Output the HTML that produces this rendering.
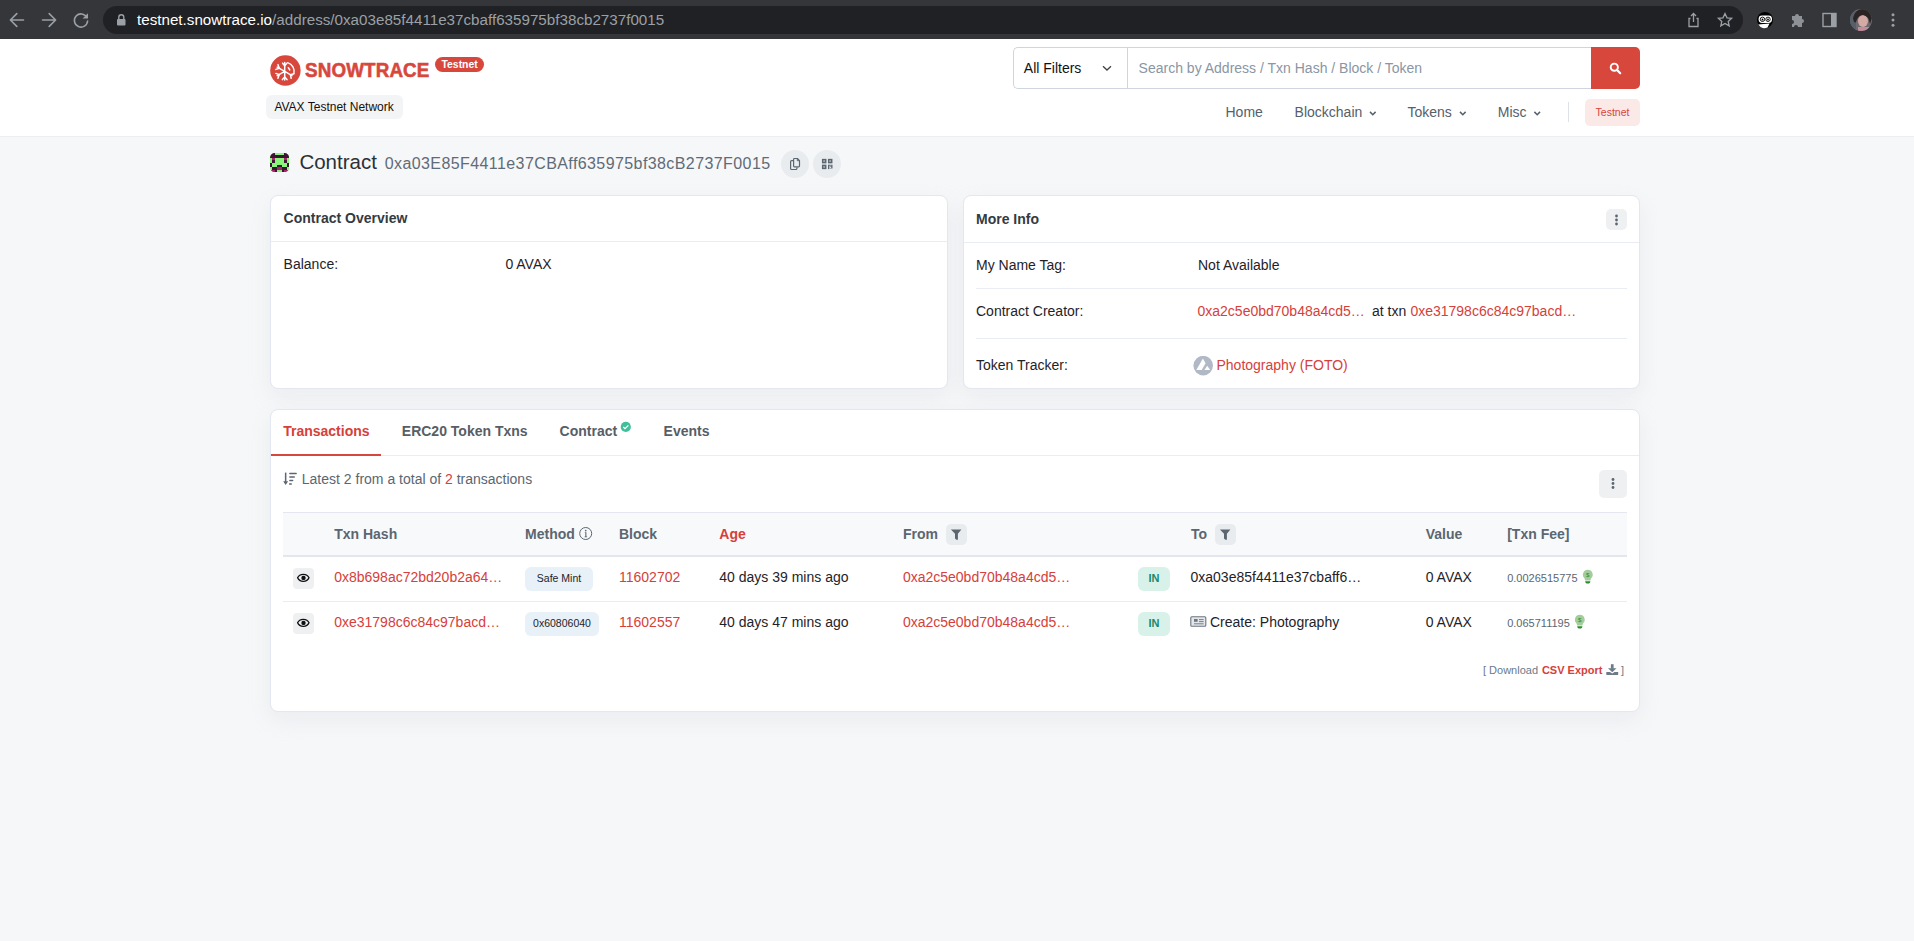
<!DOCTYPE html>
<html><head><meta charset="utf-8">
<style>
*{box-sizing:border-box;margin:0;padding:0}
html,body{width:1914px;height:941px;overflow:hidden}
body{background:#f6f7f8;font-family:"Liberation Sans",sans-serif;font-size:14px;color:#1f2328;position:relative}
.a{position:absolute}
.t{position:absolute;white-space:nowrap;line-height:1}
.red{color:#d6403a}
.b{font-weight:700}
#chrome{left:0;top:0;width:1914px;height:39px;background:#35363a}
#pill{left:103px;top:6px;width:1640px;height:28px;border-radius:14px;background:#202124}
#hdr{left:0;top:39px;width:1914px;height:98px;background:#fff;border-bottom:1px solid #eceef1}
.card{position:absolute;background:#fff;border:1px solid #e4e7ef;border-radius:8px;box-shadow:0 8px 22px rgba(189,197,209,.2)}
.hr{position:absolute;height:1px;background:#e9ecf3}
.circ{position:absolute;border-radius:50%;background:#e9ecef}
.sqbtn{position:absolute;border-radius:5px;background:#eef0f2}
.lbl{color:#1f2328}
.th{font-weight:700;color:#5b6670}
.badge{position:absolute;border-radius:6px;background:#e8f0f8;text-align:center;font-size:10.5px;color:#1f2328;line-height:22.5px}
.inb{position:absolute;border-radius:6px;background:#d8f2ea;color:#1f876b;font-weight:700;font-size:11px;text-align:center;line-height:22.5px}
</style></head><body>

<!-- browser chrome -->
<div id="chrome" class="a"></div>
<div id="pill" class="a"></div>
<svg class="a" style="left:0;top:0" width="1914" height="39">
  <g stroke="#9aa0a6" stroke-width="1.6" fill="none" stroke-linecap="round" stroke-linejoin="round">
    <path d="M23.5 20H10.8M16.8 13.6L10.4 20l6.4 6.4"/>
    <path d="M42.5 20h12.7M49.2 13.6L55.6 20l-6.4 6.4"/>
    <path d="M86.8 17.3A6.6 6.6 0 1 0 87.6 21"/>
  </g>
  <path d="M88 13.2v5.4h-5.4z" fill="#9aa0a6"/>
  <rect x="117" y="19" width="8.5" height="6.5" rx="1" fill="#9aa0a6"/>
  <path d="M118.8 19.5v-2.2a2.5 2.5 0 0 1 5 0v2.2" stroke="#9aa0a6" stroke-width="1.4" fill="none"/>
  <g stroke="#9aa0a6" stroke-width="1.3" fill="none">
    <path d="M1690.5 18.5h-1.5v8h9v-8h-1.5"/><path d="M1693.5 22V13.5M1691 16l2.5-2.5 2.5 2.5"/>
    <path d="M1725 13.5l2 4.3 4.6.5-3.4 3.1 1 4.5-4.2-2.4-4.2 2.4 1-4.5-3.4-3.1 4.6-.5z"/>
  </g>
  <circle cx="1765" cy="20" r="8" fill="#000"/>
  <rect x="1758.6" y="15.4" width="13.4" height="7.6" rx="3.4" fill="#fff"/>
  <circle cx="1762.5" cy="19.3" r="2.2" stroke="#000" stroke-width=".9" fill="#fff"/>
  <circle cx="1768" cy="19.3" r="2.2" stroke="#000" stroke-width=".9" fill="#fff"/>
  <circle cx="1762.5" cy="19.5" r=".9" fill="#000"/><circle cx="1768" cy="19.5" r=".9" fill="#000"/>
  <path d="M1758.3 24.6L1769.5 23.6L1767.5 27.6Q1765 28.4 1762.6 28Q1759.8 27 1758.3 24.6z" fill="#fff"/>
  <path d="M1792 16h3a2 2 0 0 1 4 0h3v3a2 2 0 0 1 0 4v4h-4a2 2 0 0 0-4 0h-2v-3a2 2 0 0 0 0-4z" fill="#8e9196"/>
  <rect x="1823" y="13.5" width="13" height="13" stroke="#9aa0a6" stroke-width="1.4" fill="none"/>
  <rect x="1831" y="13.5" width="5" height="13" fill="#9aa0a6"/>
  <clipPath id="av"><circle cx="1861" cy="20" r="11"/></clipPath>
  <g clip-path="url(#av)"><rect x="1850" y="9" width="22" height="22" fill="#6d6a70"/>
  <rect x="1850" y="9" width="6" height="22" fill="#57606a"/>
  <ellipse cx="1863" cy="21" rx="5" ry="6" fill="#d4aaa4"/>
  <path d="M1853 18q2-9 10-9q8 0 9 9q-1 3-2 6q-1-8-7-9q-5 0-7 7q-2 2-3-4z" fill="#2b2424"/>
  <rect x="1858" y="27" width="12" height="5" fill="#c08d9c"/></g>
  <g fill="#9aa0a6"><circle cx="1893" cy="14.8" r="1.5"/><circle cx="1893" cy="20" r="1.5"/><circle cx="1893" cy="25.2" r="1.5"/></g>
</svg>
<div class="t" style="left:137px;top:12px;font-size:15.2px;color:#fff">testnet.snowtrace.io<span style="color:#9aa0a6">/address/0xa03e85f4411e37cbaff635975bf38cb2737f0015</span></div>

<!-- header -->
<div id="hdr" class="a"></div>
<svg class="a" style="left:266px;top:51px" width="40" height="40" viewBox="0 0 40 40">
  <circle cx="19.4" cy="19.5" r="15.2" fill="#d8473c"/>
  <g stroke="#fff" stroke-width="1.5" fill="none" stroke-linecap="round" stroke-linejoin="round">
    <path d="M18.7 20.4V11.6M18.7 20.4V29M18.7 20.4L11.2 16.1M18.7 20.4L11.2 24.7M18.7 20.4L26 24.6"/>
    <path d="M16.6 12.2l2.1 2.6 2.1-2.6M16.4 28.6l2.3-2.5 2.3 2.5M11.9 13.6l1.4 3.6-3.4 1.2M11.9 27.2l1.4-3.6-3.4-1.2M25.2 27.3l-0.8-3.6 3.5-.9"/>
    <path d="M21.6 11.6A9.2 9.2 0 0 1 27.9 22.6" stroke-width="1.4"/>
    <path d="M22.3 16.7l1.5 2.3" stroke-width="1.4"/>
  </g>
</svg>
<div class="t b" style="left:305px;top:60.4px;font-size:20px;color:#d8473c;transform:scaleX(.94);transform-origin:left top;letter-spacing:.15px;-webkit-text-stroke:.55px #d8473c">SNOWTRACE</div>
<div class="a" style="left:435px;top:57px;width:49px;height:15px;border-radius:8px;background:#d8473c"></div>
<div class="t b" style="left:441.5px;top:59.5px;font-size:10.4px;color:#fff">Testnet</div>
<div class="a" style="left:266px;top:95px;width:137px;height:23.5px;border-radius:6px;background:#f3f4f5"></div>
<div class="t" style="left:274.4px;top:100.6px;font-size:12px;color:#111">AVAX Testnet Network</div>

<!-- search -->
<div class="a" style="left:1013px;top:47px;width:579px;height:42px;border:1px solid #cfd5df;border-right:none;border-radius:5px 0 0 5px;background:#fff"></div>
<div class="a" style="left:1127px;top:48px;width:1px;height:40px;background:#cfd5df"></div>
<div class="t" style="left:1023.8px;top:61.3px;font-size:14px;color:#111">All Filters</div>
<svg class="a" style="left:1100px;top:63px" width="14" height="10"><path d="M3 3.2l4 3.8 4-3.8" stroke="#444" stroke-width="1.3" fill="none"/></svg>
<div class="t" style="left:1138.6px;top:61.3px;font-size:14px;color:#8a96a3">Search by Address / Txn Hash / Block / Token</div>
<div class="a" style="left:1591px;top:47px;width:49px;height:42px;border-radius:0 5px 5px 0;background:#d8473c"></div>
<svg class="a" style="left:1605px;top:58px" width="20" height="20"><circle cx="9.3" cy="9.2" r="3.6" stroke="#fff" stroke-width="1.9" fill="none"/><path d="M11.8 11.8l3.4 3.4" stroke="#fff" stroke-width="2.2" stroke-linecap="round"/></svg>

<!-- nav -->
<div class="t" style="left:1225.5px;top:105px;font-size:14px;color:#55606b">Home</div>
<div class="t" style="left:1294.6px;top:105px;font-size:14px;color:#55606b">Blockchain</div>
<div class="t" style="left:1407.5px;top:105px;font-size:14px;color:#55606b">Tokens</div>
<div class="t" style="left:1497.8px;top:105px;font-size:14px;color:#55606b">Misc</div>
<svg class="a" style="left:0;top:100px" width="1914" height="30">
  <g stroke="#55606b" stroke-width="1.5" fill="none">
    <path d="M1370 11.9l2.8 2.8 2.8-2.8"/><path d="M1460 11.9l2.8 2.8 2.8-2.8"/><path d="M1534.4 11.9l2.8 2.8 2.8-2.8"/>
  </g>
  <rect x="1568" y="2" width="1" height="20" fill="#dde1e8"/>
</svg>
<div class="a" style="left:1585px;top:99px;width:55px;height:26.5px;border-radius:5px;background:#fbe9e8"></div>
<div class="t" style="left:1595.6px;top:107.2px;font-size:10.5px;color:#d6453a">Testnet</div>

<!-- title -->
<svg class="a" style="left:270px;top:152.7px" width="19.2" height="19.2" viewBox="0 0 8 8" shape-rendering="crispEdges">
  <defs><clipPath id="rc"><rect width="8" height="8" rx="2"/></clipPath></defs>
  <g clip-path="url(#rc)">
  <rect width="8" height="8" fill="#88f47a"/>
  <g fill="#3b1534">
    <rect x="0" y="0" width="2" height="1"/><rect x="6" y="0" width="2" height="1"/>
    <rect x="0" y="1" width="8" height="1"/>
    <rect x="1" y="3" width="1" height="1"/><rect x="6" y="3" width="1" height="1"/>
    <rect x="0" y="4" width="1" height="2"/><rect x="7" y="4" width="1" height="2"/>
    <rect x="3" y="5" width="2" height="1"/>
    <rect x="1" y="6" width="2" height="1"/><rect x="5" y="6" width="2" height="1"/>
    <rect x="2" y="7" width="1" height="1"/><rect x="5" y="7" width="1" height="1"/>
  </g>
  <g fill="#a8276a">
    <rect x="1" y="2" width="1" height="1"/><rect x="6" y="2" width="1" height="1"/>
    <rect x="3" y="6" width="2" height="1"/>
    <rect x="0" y="7" width="2" height="1"/><rect x="6" y="7" width="2" height="1"/>
  </g>
  </g>
</svg>
<div class="t" style="left:299.4px;top:152.2px;font-size:20.5px;color:#2b3036">Contract</div>
<div class="t" style="left:384.7px;top:156px;font-size:16px;letter-spacing:.41px;color:#5f6b77">0xa03E85F4411e37CBAff635975bf38cB2737F0015</div>
<div class="circ" style="left:781px;top:150px;width:28px;height:28px"></div>
<div class="circ" style="left:813px;top:150px;width:28px;height:28px"></div>
<svg class="a" style="left:781px;top:150px" width="60" height="28">
  <g stroke="#5c6670" stroke-width="1.2" fill="none" stroke-linejoin="round">
    <path d="M12.2 10.6h-1.6a1 1 0 0 0-1 1v6.9a1 1 0 0 0 1 1h4.3a1 1 0 0 0 1-1v-1.2"/>
    <path d="M13.4 8.5h3l2.1 2.1v5.5a.8.8 0 0 1-.8.8h-4.3a.8.8 0 0 1-.8-.8V9.3a.8.8 0 0 1 .8-.8z"/>
    <path d="M16.3 8.5v2.2h2.2" stroke-width="1"/>
  </g>
  <g stroke="#5c6670" stroke-width="1.5" fill="none">
    <rect x="41.7" y="9.6" width="3" height="3"/><rect x="47.7" y="9.6" width="3" height="3"/><rect x="41.7" y="15.4" width="3" height="3"/>
  </g>
  <g fill="#5c6670">
    <rect x="42.7" y="10.6" width="1" height="1"/><rect x="48.7" y="10.6" width="1" height="1"/><rect x="42.7" y="16.4" width="1" height="1"/>
    <rect x="47" y="14.7" width="1.4" height="4.4"/><rect x="48.4" y="14.7" width="1.2" height="1.3"/><rect x="49.4" y="15.6" width="1.2" height="1.5"/><rect x="50.2" y="14.7" width="1.3" height="3.3"/><rect x="49" y="18" width="2.5" height=".9" opacity=".5"/>
  </g>
</svg>

<!-- cards -->
<div class="card" style="left:270px;top:195px;width:678px;height:194px"></div>
<div class="hr" style="left:271px;top:241px;width:676px"></div>
<div class="t b" style="left:283.6px;top:211px;font-size:14px;color:#343a41">Contract Overview</div>
<div class="t" style="left:283.6px;top:257.2px;font-size:14px">Balance:</div>
<div class="t" style="left:505.4px;top:257.2px;font-size:14px">0 AVAX</div>

<div class="card" style="left:963px;top:195px;width:677px;height:194px"></div>
<div class="hr" style="left:964px;top:242px;width:675px"></div>
<div class="t b" style="left:976px;top:212.4px;font-size:14px;color:#343a41">More Info</div>
<div class="sqbtn" style="left:1606px;top:209px;width:21px;height:21px"></div>
<svg class="a" style="left:1606px;top:209px" width="21" height="21"><g fill="#5c6670"><circle cx="10.5" cy="7" r="1.4"/><circle cx="10.5" cy="11" r="1.4"/><circle cx="10.5" cy="15" r="1.4"/></g></svg>
<div class="t" style="left:976px;top:257.8px;font-size:14px">My Name Tag:</div>
<div class="t" style="left:1198px;top:257.8px;font-size:14px">Not Available</div>
<div class="hr" style="left:976px;top:288px;width:651px"></div>
<div class="t" style="left:976px;top:304.2px;font-size:14px">Contract Creator:</div>
<div class="t red" style="left:1197.5px;top:304.2px;font-size:14px">0xa2c5e0bd70b48a4cd5…</div>
<div class="t" style="left:1372px;top:304.2px;font-size:14px">at txn</div>
<div class="t red" style="left:1410.4px;top:304.2px;font-size:14px">0xe31798c6c84c97bacd…</div>
<div class="hr" style="left:976px;top:338px;width:651px"></div>
<div class="t" style="left:976px;top:357.8px;font-size:14px">Token Tracker:</div>
<svg class="a" style="left:1192.7px;top:356.3px" width="20" height="20" viewBox="0 0 20 20"><circle cx="10.2" cy="9.6" r="9.8" fill="#b1b8c6"/><path d="M9.9 2.5L12.6 7.3L8.7 13.9H3.3z" fill="#fff"/><path d="M14.2 9.7L17.2 13.9H11.4z" fill="#fff"/></svg>
<div class="t red" style="left:1216.5px;top:357.8px;font-size:14px">Photography (FOTO)</div>

<!-- tabs card -->
<div class="card" style="left:270px;top:409px;width:1370px;height:303px"></div>
<div class="hr" style="left:271px;top:455px;width:1368px"></div>
<div class="a" style="left:271px;top:454px;width:110px;height:2px;background:#d8473c"></div>
<div class="t b red" style="left:283.2px;top:424px;font-size:14px">Transactions</div>
<div class="t b" style="left:401.8px;top:424px;font-size:14px;color:#575e66">ERC20 Token Txns</div>
<div class="t b" style="left:559.6px;top:424px;font-size:14px;color:#575e66">Contract</div>
<svg class="a" style="left:620px;top:421px" width="12" height="12"><circle cx="5.8" cy="5.9" r="5.1" fill="#40bf9a"/><path d="M3.3 6l1.7 1.6 3.4-3.2" stroke="#fff" stroke-width="1.3" fill="none"/></svg>
<div class="t b" style="left:663.6px;top:424px;font-size:14px;color:#575e66">Events</div>

<svg class="a" style="left:283px;top:472px" width="16" height="14">
  <rect x="1.9" y=".6" width="1.5" height="9.5" fill="#5c6670"/><path d="M.2 9.2h4.9l-2.45 3.7z" fill="#5c6670"/>
  <g fill="#5c6670"><rect x="6.1" y=".65" width="7.8" height="1.5" rx=".75"/><rect x="6.1" y="4.25" width="5.9" height="1.5" rx=".75"/><rect x="6.1" y="7.75" width="4.3" height="1.5" rx=".75"/><rect x="6.1" y="11.25" width="2.7" height="1.5" rx=".3"/></g>
</svg>
<div class="t" style="left:301.8px;top:471.9px;font-size:14px;color:#5b6670">Latest 2 from a total of <span class="red">2</span> transactions</div>
<div class="sqbtn" style="left:1599px;top:470px;width:28px;height:28px"></div>
<svg class="a" style="left:1599px;top:470px" width="28" height="27"><g fill="#5c6670"><circle cx="14" cy="9.5" r="1.4"/><circle cx="14" cy="13.5" r="1.4"/><circle cx="14" cy="17.5" r="1.4"/></g></svg>

<!-- table -->
<div class="a" style="left:283px;top:512px;width:1344px;height:45px;background:#f8f9fb;border-top:1px solid #e4e7ef;border-bottom:2px solid #e2e6ee"></div>
<div class="t th" style="left:334.2px;top:527px;font-size:14px">Txn Hash</div>
<div class="t th" style="left:525.1px;top:527px;font-size:14px">Method</div>
<svg class="a" style="left:579px;top:527px" width="14" height="14"><circle cx="6.7" cy="6.5" r="6" stroke="#5b6670" stroke-width="1" fill="none"/><path d="M5.8 5.2h1.6v4.2h.7v.9H5.6v-.9h.7V6.1h-.5z" fill="#5b6670"/><circle cx="6.75" cy="3.6" r=".85" fill="#5b6670"/></svg>
<div class="t th" style="left:619px;top:527px;font-size:14px">Block</div>
<div class="t b red" style="left:719.3px;top:527px;font-size:14px">Age</div>
<div class="t th" style="left:902.9px;top:527px;font-size:14px">From</div>
<div class="sqbtn" style="left:946px;top:524px;width:21px;height:21px;border-radius:5px;background:#e9ecef"></div>
<svg class="a" style="left:946px;top:524px" width="21" height="21"><path d="M4.9 5.6H15.4L11.9 9.8V15.8H10.4L9 14.6V9.8Z" fill="#5c6670"/></svg>
<div class="t th" style="left:1190.9px;top:527px;font-size:14px">To</div>
<div class="sqbtn" style="left:1215px;top:524px;width:21px;height:21px;border-radius:5px;background:#e9ecef"></div>
<svg class="a" style="left:1215px;top:524px" width="21" height="21"><path d="M4.9 5.6H15.4L11.9 9.8V15.8H10.4L9 14.6V9.8Z" fill="#5c6670"/></svg>
<div class="t th" style="left:1425.7px;top:527px;font-size:14px">Value</div>
<div class="t th" style="left:1507.2px;top:527px;font-size:14px">[Txn Fee]</div>

<!-- row 1 -->
<div class="sqbtn" style="left:293px;top:568px;width:21px;height:21px;border-radius:4px"></div>
<svg class="a" style="left:293px;top:568px" width="21" height="21"><path d="M4.6 9.8C6.6 5.1 14 5.1 16 9.8C14 14.5 6.6 14.5 4.6 9.8z" stroke="#111" stroke-width="1.3" fill="none"/><circle cx="10.5" cy="9.9" r="2.2" fill="#111"/></svg>
<div class="t red" style="left:334.2px;top:570.2px;font-size:14px">0x8b698ac72bd20b2a64…</div>
<div class="badge" style="left:525px;top:567px;width:68px;height:24px">Safe Mint</div>
<div class="t red" style="left:619px;top:570.2px;font-size:14px">11602702</div>
<div class="t" style="left:719.3px;top:570.2px;font-size:14px">40 days 39 mins ago</div>
<div class="t red" style="left:902.9px;top:570.2px;font-size:14px">0xa2c5e0bd70b48a4cd5…</div>
<div class="inb" style="left:1138px;top:567px;width:32px;height:24px">IN</div>
<div class="t" style="left:1190.5px;top:570.2px;font-size:14px">0xa03e85f4411e37cbaff6…</div>
<div class="t" style="left:1425.7px;top:570.2px;font-size:14px">0 AVAX</div>
<div class="t" style="left:1507.2px;top:573px;font-size:11px;color:#5b6670">0.0026515775</div>
<svg class="a" style="left:1582px;top:569px" width="12" height="16"><path d="M5.8 .8a4.9 4.9 0 0 0-3.2 8.6l.6 2h5.2l.6-2A4.9 4.9 0 0 0 5.8 .8z" fill="#a3cd9c"/><path d="M3.2 12.2h5.2a2.6 2.4 0 0 1-5.2 0z" fill="#2e8a30"/><text x="5.8" y="7.6" font-size="6.2" font-family="Liberation Sans" fill="#2e8a30" text-anchor="middle">$</text></svg>
<div class="hr" style="left:283px;top:601px;width:1344px"></div>

<!-- row 2 -->
<div class="sqbtn" style="left:293px;top:613px;width:21px;height:21px;border-radius:4px"></div>
<svg class="a" style="left:293px;top:613px" width="21" height="21"><path d="M4.6 9.8C6.6 5.1 14 5.1 16 9.8C14 14.5 6.6 14.5 4.6 9.8z" stroke="#111" stroke-width="1.3" fill="none"/><circle cx="10.5" cy="9.9" r="2.2" fill="#111"/></svg>
<div class="t red" style="left:334.2px;top:615.2px;font-size:14px">0xe31798c6c84c97bacd…</div>
<div class="badge" style="left:525px;top:612px;width:74px;height:24px">0x60806040</div>
<div class="t red" style="left:619px;top:615.2px;font-size:14px">11602557</div>
<div class="t" style="left:719.3px;top:615.2px;font-size:14px">40 days 47 mins ago</div>
<div class="t red" style="left:902.9px;top:615.2px;font-size:14px">0xa2c5e0bd70b48a4cd5…</div>
<div class="inb" style="left:1138px;top:612px;width:32px;height:24px">IN</div>
<svg class="a" style="left:1190px;top:616px" width="17" height="11"><rect x=".8" y=".8" width="15" height="9.4" rx="1" fill="#e3e6ea" stroke="#6b7580" stroke-width="1.1"/><rect x="4" y="3" width="3.6" height="2.8" fill="#6b7580"/><path d="M9 3.6h4.6M9 5.6h4.6M4 7.8h9.6" stroke="#6b7580" stroke-width=".9"/></svg>
<div class="t" style="left:1210px;top:615.2px;font-size:14px">Create: Photography</div>
<div class="t" style="left:1425.7px;top:615.2px;font-size:14px">0 AVAX</div>
<div class="t" style="left:1507.2px;top:618px;font-size:11px;color:#5b6670">0.065711195</div>
<svg class="a" style="left:1574px;top:614px" width="12" height="16"><path d="M5.8 .8a4.9 4.9 0 0 0-3.2 8.6l.6 2h5.2l.6-2A4.9 4.9 0 0 0 5.8 .8z" fill="#a3cd9c"/><path d="M3.2 12.2h5.2a2.6 2.4 0 0 1-5.2 0z" fill="#2e8a30"/><text x="5.8" y="7.6" font-size="6.2" font-family="Liberation Sans" fill="#2e8a30" text-anchor="middle">$</text></svg>

<!-- download -->
<div class="t" style="left:1483px;top:664.6px;font-size:11px;color:#6c7a89">[ Download</div>
<div class="t b red" style="left:1541.9px;top:664.6px;font-size:11px">CSV Export</div>
<svg class="a" style="left:1605px;top:663px" width="14" height="14"><rect x="5.9" y="1.2" width="2.7" height="4.6" fill="#6c7a89"/><path d="M3 5.3h8.5l-4.25 3.9z" fill="#6c7a89"/><path d="M1.3 9.1h3.6l2.35 1.4 2.35-1.4h3.6v2.3a.7.7 0 0 1-.7.7H2a.7.7 0 0 1-.7-.7z" fill="#6c7a89"/></svg>
<div class="t" style="left:1620.9px;top:664.6px;font-size:11px;color:#6c7a89">]</div>

</body></html>
